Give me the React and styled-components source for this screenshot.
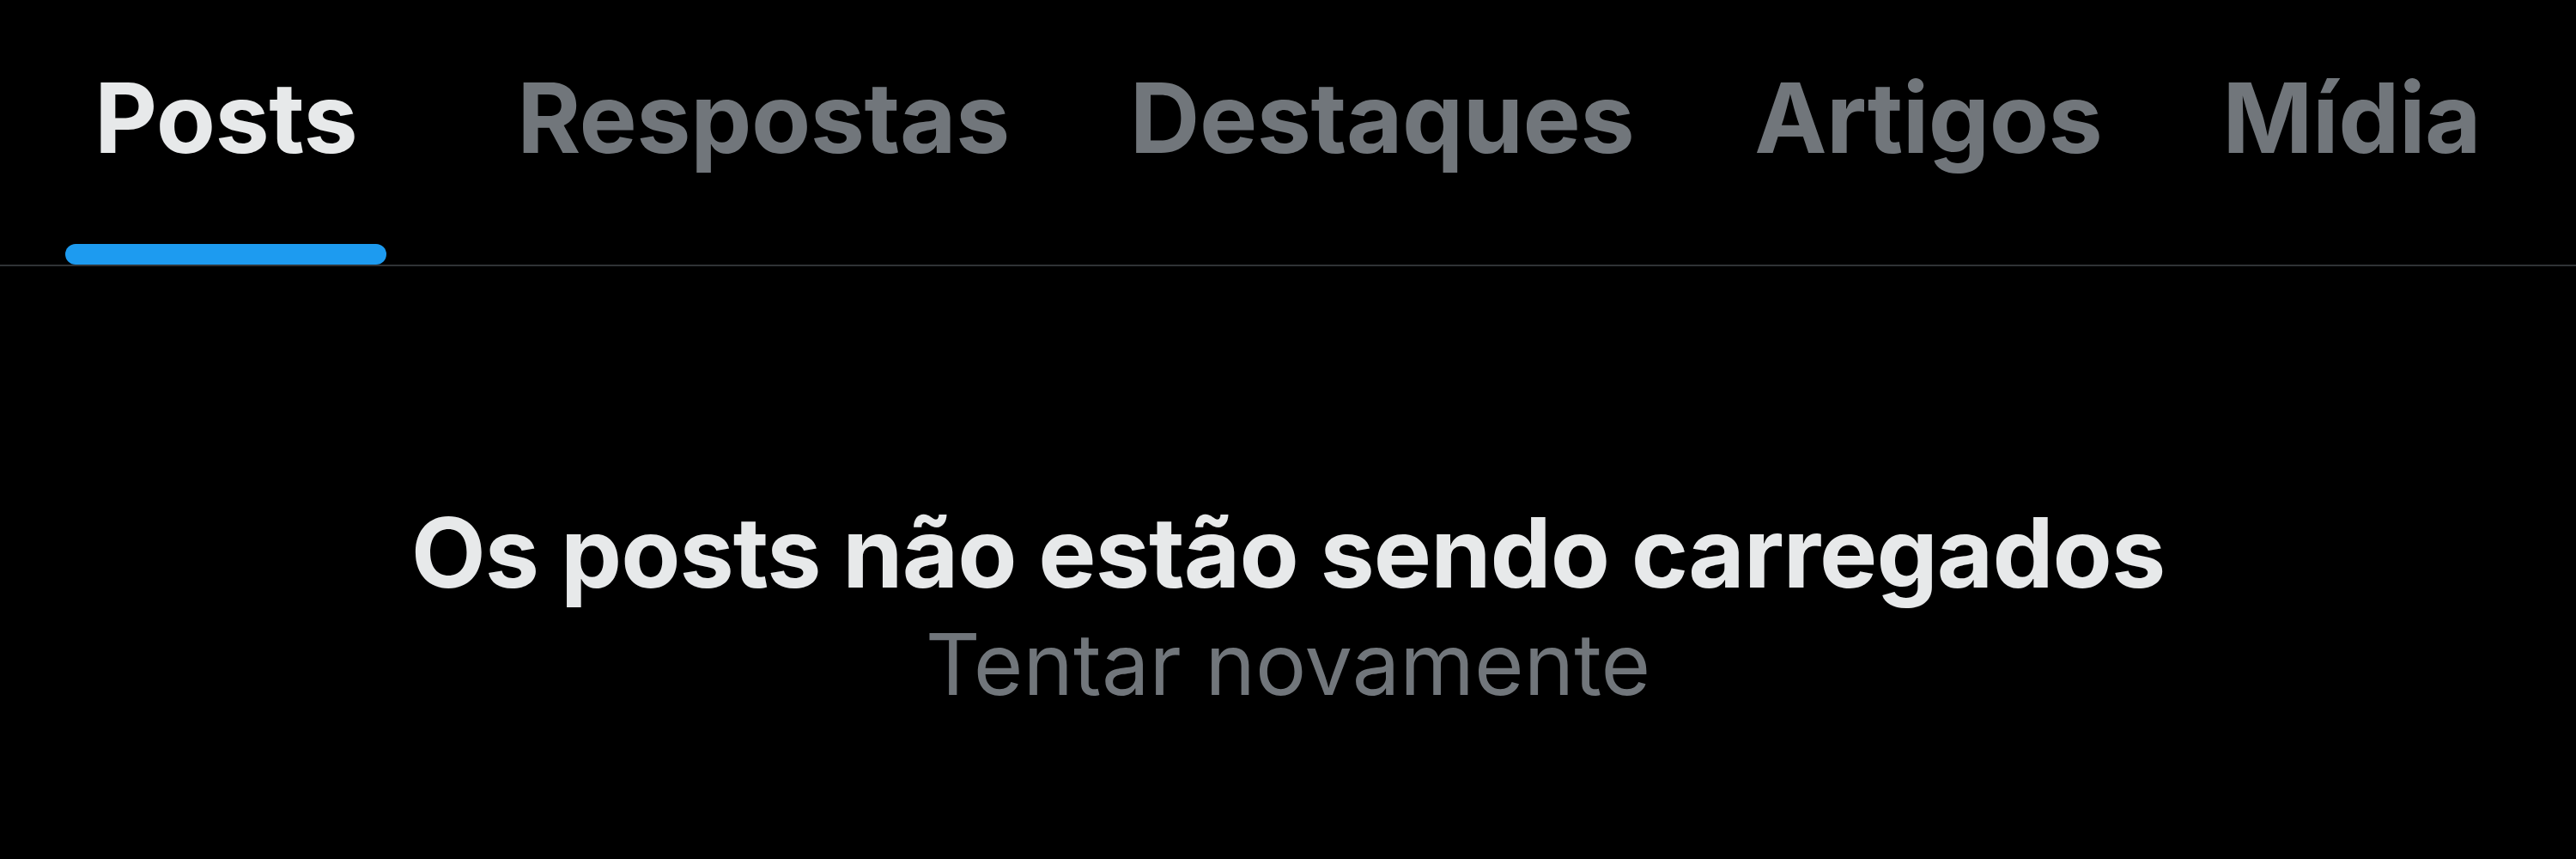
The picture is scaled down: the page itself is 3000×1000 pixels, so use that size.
import React from "react";
import styled, { createGlobalStyle } from "styled-components";

const GlobalStyle = createGlobalStyle`
  html, body {
    margin: 0;
    padding: 0;
    background: #000000;
  }
  body {
    width: 3000px;
    height: 1000px;
    overflow: hidden;
    font-family: Inter, "Noto Sans", "Liberation Sans", sans-serif;
    -webkit-font-smoothing: antialiased;
  }
`;

const Screen = styled.div`
  width: 3000px;
  height: 1000px;
  background: #000000;
  display: flex;
  flex-direction: column;
`;

const TabList = styled.nav`
  display: flex;
  align-items: flex-end;
  padding: 81px 0 0 40px;
  border-bottom: 2px solid #2f3336;
`;

const Tab = styled.div`
  display: flex;
  flex-direction: column;
  align-items: center;
  padding: 0 70px;
  margin-right: ${(p) => (p.$active ? "46px" : "0")};
`;

const TabLabel = styled.span`
  font-size: 113px;
  line-height: 113px;
  font-weight: 700;
  letter-spacing: -0.5px;
  white-space: nowrap;
  color: ${(p) => (p.$active ? "#e7e9ea" : "#71767b")};
`;

const Indicator = styled.div`
  align-self: stretch;
  margin: 90px -34px 0;
  height: 24px;
  border-radius: 12px;
  background: ${(p) => (p.$active ? "#1d9bf0" : "transparent")};
`;

const Empty = styled.section`
  display: flex;
  flex-direction: column;
  align-items: center;
  padding-top: 277px;
`;

const Title = styled.h2`
  margin: 0;
  font-size: 113px;
  line-height: 113px;
  font-weight: 700;
  letter-spacing: -1px;
  color: #e7e9ea;
  white-space: nowrap;
`;

const Retry = styled.button`
  margin-top: 24px;
  padding: 0;
  border: 0;
  background: none;
  font-family: inherit;
  font-size: 99px;
  line-height: 99px;
  font-weight: 400;
  color: #71767b;
  cursor: pointer;
  white-space: nowrap;
`;

const tabs = ["Posts", "Respostas", "Destaques", "Artigos", "Mídia"];

export default function App() {
  return (
    <>
      <GlobalStyle />
      <Screen>
        <TabList>
          {tabs.map((t, i) => (
            <Tab key={t} $active={i === 0}>
              <TabLabel $active={i === 0}>{t}</TabLabel>
              <Indicator $active={i === 0} />
            </Tab>
          ))}
        </TabList>
        <Empty>
          <Title>Os posts não estão sendo carregados</Title>
          <Retry>Tentar novamente</Retry>
        </Empty>
      </Screen>
    </>
  );
}
